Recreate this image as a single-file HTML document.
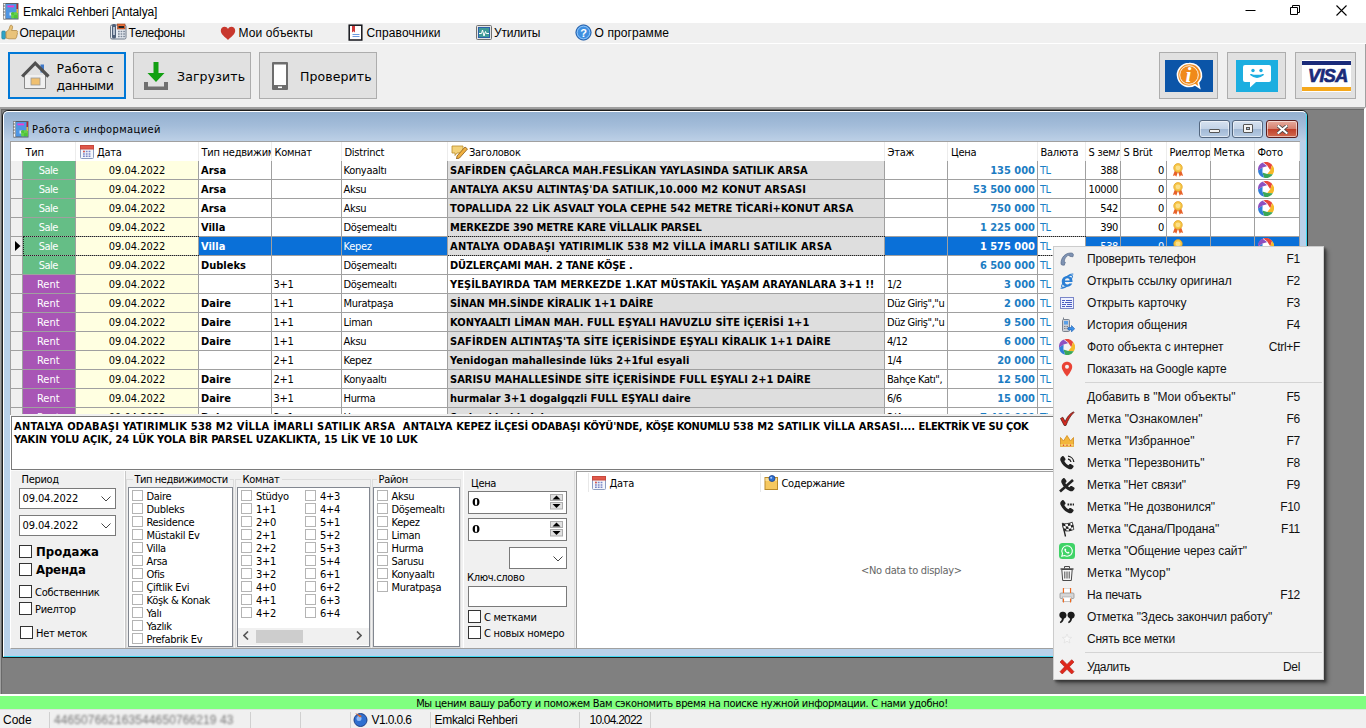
<!DOCTYPE html>
<html lang="ru"><head><meta charset="utf-8"><title>Emkalci Rehberi [Antalya]</title>
<style>
*{box-sizing:border-box}
html,body{margin:0;padding:0}
body{width:1366px;height:728px;position:relative;overflow:hidden;background:#f0f0f0;font-family:"DejaVu Sans Condensed","DejaVu Sans","Liberation Sans",sans-serif;font-stretch:condensed;font-size:11px;color:#000}
.a{position:absolute}
.t{position:absolute;white-space:pre;line-height:1}
.L{font-family:"Liberation Sans",sans-serif;font-stretch:normal}
#title{left:0;top:0;width:1366px;height:23px;background:#fff}
#menu{left:0;top:23px;width:1366px;height:21px;background:#f0f0f0;border-bottom:1px solid #fff;font-family:"Liberation Sans",sans-serif;font-stretch:normal}
#menu .t{top:3px;font-size:12px;line-height:14px}
#tool{left:0;top:44px;width:1366px;height:63px;background:#f0f0f0;border-right:1px solid #a0a0a0}
.btn{position:absolute;top:52px;height:47px;background:#e1e1e1;border:1px solid #adadad}
.btn .t{font-family:"DejaVu Sans","Liberation Sans",sans-serif;font-stretch:normal;font-size:12.5px;line-height:16.5px}
#mdi{left:0;top:107px;width:1366px;height:587px;background:#808080;border-top:2px solid #a0a0a0;border-left:1px solid #a0a0a0;border-right:2px solid #fff}
#mdi:before{content:"";position:absolute;left:0;top:0;right:0;bottom:0;border-top:1px solid #696969;border-left:1px solid #696969}
#child{left:2px;top:110px;width:1306px;height:548px;border:1px solid #1c1c1c;border-radius:6px 6px 0 0;background:#b9d1ea;overflow:hidden}
#child .hl{left:0;top:0;right:0;bottom:0;border:1px solid #fff;border-bottom-color:#3fd8f2;border-right-color:#3fd8f2;border-radius:5px 5px 0 0}
#cap{left:1px;top:1px;right:1px;height:30px;background:linear-gradient(#93b0d0,#a3bcd9 45%,#bed1e7);border-radius:4px 4px 0 0}
#client{left:10px;top:141px;width:1290px;height:508px;background:#f0f0f0;border-left:1px solid #fff;border-bottom:1px solid #a0a0a0}
.cb{position:absolute;top:120px;height:18px;border:1px solid #53667f;border-radius:3px;background:linear-gradient(#d6e2f0,#c3d3e7 48%,#a2b9d5 52%,#b7cbe3);box-shadow:inset 0 0 0 1px rgba(255,255,255,.55)}
.cb.x{border-color:#5b1d1d;background:linear-gradient(#e7ac9e,#d68170 48%,#c0402a 52%,#d16a50)}
#grid{left:11px;top:142px;width:1289px;height:272px;background:#fff;overflow:hidden}
.hd{position:absolute;top:0;height:19px;background:#fff;border-right:1px solid #ececec;font-size:11px;line-height:21px;white-space:pre;overflow:hidden;padding-left:2.5px;letter-spacing:-.25px}
.r{position:absolute;left:0;width:1289px;height:19px}
.c{position:absolute;top:0;height:19px;border-right:1px solid #a0a0a0;border-bottom:1px solid #a0a0a0;line-height:20px;white-space:pre;overflow:hidden;padding:0 3px 0 1.5px;font-size:11px;letter-spacing:-.3px}
.ind{background:#f0f0f0}
.sale{background:#65be86;color:#fff;text-align:center;letter-spacing:-.5px}
.rent{background:#a855b5;color:#fff;text-align:center;letter-spacing:0}
.dt{background:#ffffe1;text-align:center;padding:0;letter-spacing:0}
.b{font-weight:bold;letter-spacing:0;padding-left:2px}
.g{background:#dedede}
.pr{color:#1b7cc2;font-weight:bold;text-align:right;padding-right:2px;letter-spacing:0}
.tl{color:#1b7fc4;letter-spacing:-.5px;padding-left:2px}
.ra{text-align:right;padding-right:2px;letter-spacing:-.4px}
.sel{background:#0a70d8;color:#fff}
#memo{left:11px;top:416px;width:1289px;height:54px;background:#fff;border:1px solid #7a7a7a;font-weight:bold;font-size:11px;line-height:13px;padding:3px 0 0 2px;white-space:pre}
.lbl{position:absolute;white-space:pre;font-size:11px;line-height:13px;letter-spacing:-.3px}
.box{position:absolute;background:#fff;border:1px solid #828790}
.ck{position:absolute;width:11px;height:11px;background:#fff;border:1px solid #b4b4b4}
.ckd{position:absolute;width:13px;height:13px;background:#fff;border:1px solid #333}
.li{position:absolute;white-space:pre;font-size:11px;line-height:13px;letter-spacing:-.3px}
.grp{position:absolute;border:1px solid #dcdcdc}
#ctx{left:1053px;top:246px;width:271px;height:434px;background:#f2f2f2;border:1px solid #ccc;box-shadow:2px 2px 2px rgba(0,0,0,.4),4px 4px 4px rgba(0,0,0,.3);font-family:"Liberation Sans",sans-serif;font-stretch:normal;color:#111}
#ctx .t{left:33px;font-size:12px;line-height:14px}
#ctx .s{position:absolute;right:23px;font-size:12px;line-height:14px;white-space:pre;letter-spacing:-.3px}
#ctx .sep{position:absolute;left:31px;right:1px;height:1px;background:#d4d4d4}
#ctx svg{position:absolute;left:5px}
#green{left:0;top:694px;width:1366px;height:15px;background:#80ff80;border-top:2px solid #fff;font-size:11px;line-height:15px;text-align:center;white-space:pre}
#status{left:0;top:709px;width:1366px;height:19px;background:#f0f0f0;border-top:1px solid #e0e0e0;font-family:"Liberation Sans",sans-serif;font-stretch:normal}
#status .t{top:3px;font-size:12px;line-height:14px}
#status .sp{position:absolute;top:2px;width:1px;height:17px;background:#d0d0d0}
</style></head>
<body>
<div id="title" class="a L"><svg class="a" style="left:3px;top:3px" width="16" height="17" viewBox="0 0 16 17"><rect x="1" y=".5" width="14" height="15.500" fill="#4f96e4" stroke="#5a5f66"/><rect x=".5" y=".5" width="2" height="15.500" fill="#f4f6f8" stroke="#777" stroke-width=".5"/><path d="M0 3h2M0 6h2M0 9h2M0 12h2" stroke="#666" stroke-width=".9"/><rect x="4.500" y="2.500" width="6.500" height="1.800" fill="#f23ad0"/><rect x="13.500" y="1" width="1.500" height="5" fill="#b8242c"/><rect x="13.500" y="6" width="1.500" height="4" fill="#e2b43a"/><rect x="13.500" y="10" width="1.500" height="5.500" fill="#6fbf3a"/><rect x="6.500" y="9.500" width="3" height="3" fill="#dfeaf6"/><circle cx="9.800" cy="10.800" r="1.900" fill="#4fc437"/><circle cx="12.600" cy="10.800" r="1.900" fill="#66d14a"/><circle cx="9.800" cy="13.700" r="1.900" fill="#66d14a"/><circle cx="12.600" cy="13.700" r="1.900" fill="#4fc437"/></svg><div class="t" style="left:23px;top:5px;font-size:12px;line-height:14px;letter-spacing:-0.125px">Emkalci Rehberi [Antalya]</div><svg class="a" style="left:1240px;top:0" width="126" height="23" viewBox="0 0 126 23"><path d="M5.500 10.500h10" stroke="#000" stroke-width="1" fill="none"/><path d="M50.500 7.500h7v7h-7zM52.500 7.500v-2h7v7h-2" stroke="#000" stroke-width="1" fill="none"/><path d="M96.500 5.500l10 10M106.500 5.500l-10 10" stroke="#000" stroke-width="1.100" fill="none"/></svg></div>
<div id="menu" class="a"><svg class="a" style="left:1px;top:0" width="18" height="18" viewBox="0 0 18 18"><rect x=".8" y="8" width="3.600" height="8" rx="1" fill="#2fa4c9" stroke="#1c7896" stroke-width=".6"/><path d="M5 9c2-1 3.500-3 4-6 .3-1.500 2.800-1 2.600 1.200-.1 1.300-.6 2.400-1 3.300h4.600c1.700 0 1.800 2 .7 2.300 1 .5.800 2-.3 2.200.8.600.5 1.900-.5 2 .5.800 0 1.800-1.200 1.800H8c-1.200 0-2-.6-3-.8z" fill="#e9c37a" stroke="#a9803a" stroke-width=".7"/></svg><div class="t" style="left:19.5px;letter-spacing:-0.092px">Операции</div><svg class="a" style="left:110px;top:0" width="17" height="17" viewBox="0 0 17 17"><rect x=".5" y="2" width="15.500" height="14" rx="1.500" fill="#e8ecf2" stroke="#6b7787"/><rect x="2" y="1" width="4" height="14.500" rx="1.500" fill="#50617a"/><rect x="3.200" y="4" width="1.600" height="8" fill="#cfd8e4"/><rect x="7.500" y="1" width="7.500" height="5" fill="#e8703a" stroke="#9c3f18" stroke-width=".6"/><rect x="8.500" y="3" width="5.500" height="2" fill="#222"/><path d="M8 8.500h7M8 11h7M8 13.500h7" stroke="#7b8798" stroke-width="1.500" stroke-dasharray="1.700 .9"/></svg><div class="t" style="left:128.5px;letter-spacing:-0.272px">Телефоны</div><svg class="a" style="left:220px;top:3px" width="16" height="15" viewBox="0 0 16 15"><path d="M8 14C5 11 .8 8.500.8 4.800.8 2.400 2.600.8 4.600.8 6.100.8 7.300 1.600 8 2.900 8.700 1.600 9.900.8 11.400.8c2 0 3.800 1.600 3.800 4 0 3.700-4.200 6.200-7.200 9.200z" fill="#c8372d"/></svg><div class="t" style="left:238.5px;letter-spacing:0.083px">Мои объекты</div><svg class="a" style="left:348px;top:1px" width="15" height="17" viewBox="0 0 15 17"><rect x="1.2" y="1.2" width="12.6" height="14.8" fill="#fff" stroke="#14161c" stroke-width="1.500"/><path d="M4 2h3v6.500l-1.500-1.300L4 8.500z" fill="#d03a3a"/><path d="M4.500 10.500h7M4.500 12.500h7" stroke="#6a9be0" stroke-width="1"/></svg><div class="t" style="left:366.5px;letter-spacing:0.13px">Справочники</div><svg class="a" style="left:476px;top:2px" width="16" height="15" viewBox="0 0 16 15"><rect x=".5" y=".5" width="15" height="14" rx="1" fill="#e4e4e4" stroke="#707070"/><rect x="2" y="2" width="12" height="11" fill="#2a5fa8"/><rect x="3" y="3" width="10" height="9" fill="#3f9a96"/><path d="M3 8.500h2.500l1-3.500 1.500 6 1.500-4.500.8 2h2.700" stroke="#fff" stroke-width="1" fill="none"/></svg><div class="t" style="left:494px;letter-spacing:-0.193px">Утилиты</div><svg class="a" style="left:575px;top:1px" width="17" height="17" viewBox="0 0 17 17"><circle cx="8.500" cy="8.500" r="7.600" fill="#3f8fe0" stroke="#1c57a3" stroke-width="1"/><circle cx="8.500" cy="8.500" r="6.300" fill="none" stroke="#9fd0ff" stroke-width=".8"/><text x="8.500" y="12.500" font-family="Liberation Sans,sans-serif" font-size="11" font-weight="bold" fill="#fff" text-anchor="middle">?</text></svg><div class="t" style="left:594.5px;letter-spacing:0.108px">О программе</div></div>
<div id="tool" class="a"></div>
<div class="btn" style="left:8px;width:118px;border:2px solid #0078d7"><svg class="a" style="left:10px;top:6px" width="30" height="30" viewBox="0 0 30 30"><rect x="20.500" y="4.500" width="3.500" height="8" fill="#3f78c8"/><path d="M4.500 15v13.500h21V15" fill="#f0f0f0" stroke="#8a8a8a" stroke-width="1"/><path d="M2.200 16.500L15.200 3.200l13.300 13.300" fill="none" stroke="#505050" stroke-width="3.200"/><rect x="11" y="18" width="9" height="7" fill="#f0c070" stroke="#9a9a9a" stroke-width=".8"/></svg><div class="t" style="left:46.500px;top:7px"><span style="letter-spacing:0.094px">Работа с</span>
<span style="letter-spacing:-0.43px">данными</span></div></div>
<div class="btn" style="left:133px;width:118px"><svg class="a" style="left:9px;top:9px" width="26" height="29" viewBox="0 0 26 29"><path d="M10.500 0h5v11h6L13 20 4.500 11h6z" fill="#12a012"/><path d="M1 20h4v4.500h16v-4.500h4v8H1z" fill="#707070"/></svg><div class="t" style="left:43px;top:15.500px;letter-spacing:0.125px">Загрузить</div></div>
<div class="btn" style="left:259px;width:118px"><svg class="a" style="left:12px;top:9px" width="16" height="28" viewBox="0 0 16 28"><rect x="0" y="0" width="16" height="28" rx="1" fill="#6e6e6e"/><rect x="2" y="2.500" width="12" height="20.500" fill="#fff"/><rect x="6" y="24.500" width="4" height="1.600" fill="#fff"/></svg><div class="t" style="left:40px;top:15.500px;letter-spacing:0.094px">Проверить</div></div>
<div class="btn" style="left:1159px;width:59px"><div class="a" style="left:5px;top:7px;width:48px;height:32px;background:#0b55a8"></div><svg class="a" style="left:15px;top:9px" width="30" height="30" viewBox="0 0 30 30"><path d="M14 1.500a11.500 11.500 0 1 0 6 21.300l4.500 3-1.200-5A11.500 11.500 0 0 0 14 1.500z" fill="#f08a1a" stroke="#fff" stroke-width="1.600"/><circle cx="14" cy="13" r="9.300" fill="none" stroke="#fff" stroke-width=".9"/><text x="13.500" y="20" font-family="Liberation Serif,serif" font-size="21" font-style="italic" font-weight="bold" fill="#fff" text-anchor="middle">i</text></svg></div>
<div class="btn" style="left:1227px;width:59px"><div class="a" style="left:8px;top:7px;width:42px;height:32px;background:#1caee0"></div><svg class="a" style="left:14px;top:11px" width="30" height="26" viewBox="0 0 30 26"><path d="M3 1h24a2 2 0 0 1 2 2v13a2 2 0 0 1-2 2H14l-6 5.500V18H3a2 2 0 0 1-2-2V3a2 2 0 0 1 2-2z" fill="#fff"/><circle cx="11" cy="6.500" r="1.700" fill="#1caee0"/><circle cx="19" cy="6.500" r="1.700" fill="#1caee0"/><path d="M8.500 10.500q6.500 5.500 13 0q-6.500 2-13 0z" stroke="#1caee0" stroke-width="1.300" fill="#1caee0"/></svg></div>
<div class="btn" style="left:1295px;width:61px"><div class="a" style="left:6px;top:7px;width:49px;height:32px;background:#fff"></div><div class="a" style="left:6px;top:8px;width:49px;height:4px;background:#1a2b7a"></div><div class="a" style="left:6px;top:34px;width:49px;height:4px;background:#f5a81c"></div><div class="t L" style="left:12px;top:14px;font:italic bold 18px 'Liberation Sans',sans-serif;color:#1a2b7a;letter-spacing:-.6px;line-height:18px;-webkit-text-stroke:.7px #1a2b7a">VISA</div></div>
<div id="mdi" class="a"></div>
<div id="child" class="a"><div id="cap" class="a"></div><div class="hl a"></div></div>
<svg class="a" style="left:13px;top:121px" width="16" height="17" viewBox="0 0 16 17"><rect x="1" y=".5" width="14" height="15.500" fill="#4f96e4" stroke="#5a5f66"/><rect x=".5" y=".5" width="2" height="15.500" fill="#f4f6f8" stroke="#777" stroke-width=".5"/><path d="M0 3h2M0 6h2M0 9h2M0 12h2" stroke="#666" stroke-width=".9"/><rect x="4.500" y="2.500" width="6.500" height="1.800" fill="#f23ad0"/><rect x="13.500" y="1" width="1.500" height="5" fill="#b8242c"/><rect x="13.500" y="6" width="1.500" height="4" fill="#e2b43a"/><rect x="13.500" y="10" width="1.500" height="5.500" fill="#6fbf3a"/><rect x="6.500" y="9.500" width="3" height="3" fill="#dfeaf6"/><circle cx="9.800" cy="10.800" r="1.900" fill="#4fc437"/><circle cx="12.600" cy="10.800" r="1.900" fill="#66d14a"/><circle cx="9.800" cy="13.700" r="1.900" fill="#66d14a"/><circle cx="12.600" cy="13.700" r="1.900" fill="#4fc437"/></svg><div class="t" style="left:32px;top:123px;font-size:11px;line-height:14px;letter-spacing:0.413px">Работа с информацией</div>
<div class="cb" style="left:1199px;width:31px"><div class="a" style="left:9px;top:8px;width:11px;height:4px;background:#f4f4f4;border:1px solid #555;border-radius:1px"></div></div><div class="cb" style="left:1232px;width:31px"><div class="a" style="left:10px;top:3px;width:10px;height:9px;background:#f4f4f4;border:1px solid #555;border-radius:1px"></div><div class="a" style="left:13px;top:6px;width:4px;height:3px;background:#a9bfdb;border:1px solid #555"></div></div><div class="cb x" style="left:1266px;width:32px"><svg class="a" style="left:9.500px;top:3.500px" width="11" height="9" viewBox="0 0 12 10"><path d="M1.500 1.200l9 7.600M10.500 1.200l-9 7.600" stroke="#444" stroke-width="4" stroke-linecap="square"/><path d="M1.500 1.200l9 7.600M10.500 1.200l-9 7.600" stroke="#fff" stroke-width="2.300" stroke-linecap="square"/></svg></div>
<div id="client" class="a"></div>
<div id="grid" class="a"><div class="hd" style="left:0px;width:12px;border-right-color:#fff"></div><div class="hd" style="left:12px;width:53px">Тип</div><div class="hd" style="left:65px;width:123px;padding-left:21px">Дата</div><div class="hd" style="left:188px;width:73px">Тип недвижимости</div><div class="hd" style="left:261px;width:70px">Комнат</div><div class="hd" style="left:331px;width:106px">Distrinct</div><div class="hd" style="left:437px;width:437px;padding-left:21px">Заголовок</div><div class="hd" style="left:874px;width:63px">Этаж</div><div class="hd" style="left:937px;width:90px;padding-left:3px">Цена</div><div class="hd" style="left:1027px;width:48px">Валюта</div><div class="hd" style="left:1075px;width:35px">S земли</div><div class="hd" style="left:1110px;width:46px">S Brüt</div><div class="hd" style="left:1156px;width:44px">Риелтор</div><div class="hd" style="left:1200px;width:44px">Метка</div><div class="hd" style="left:1244px;width:45px">Фото</div><svg class="a" style="left:69px;top:3px" width="14" height="14" viewBox="0 0 14 14"><rect x=".5" y=".5" width="13" height="13" rx="1" fill="#f4f6fb" stroke="#8c9cc0"/><rect x=".5" y=".5" width="13" height="3.500" fill="#e0584a" stroke="#c8483c"/><path d="M3 6.500h8M3 9h8M3 11.300h8" stroke="#7a86c8" stroke-width="1.500" stroke-dasharray="1.800 1"/><rect x="3" y="5.800" width="1.800" height="1.500" fill="#e0584a"/></svg><svg class="a" style="left:440px;top:2px" width="18" height="15" viewBox="0 0 18 15"><path d="M1 2h11v7H6l-2 2.500V9H1z" fill="#f3d27a" stroke="#b98a2a" stroke-width=".8"/><path d="M6 12l8-9 2.500 2-8 9-3 1z" fill="#f0b040" stroke="#8a5a18" stroke-width=".8"/></svg><div class="r" style="top:19px"><div class="c ind" style="left:0px;width:12px"></div><div class="c sale" style="left:12px;width:53px">Sale</div><div class="c dt" style="left:65px;width:123px">09.04.2022</div><div class="c b" style="left:188px;width:73px">Arsa</div><div class="c " style="left:261px;width:70px"></div><div class="c " style="left:331px;width:106px">Konyaaltı</div><div class="c b g" style="left:437px;width:437px;letter-spacing:0.002px">SAFİRDEN ÇAĞLARCA MAH.FESLİKAN YAYLASINDA SATILIK ARSA</div><div class="c " style="left:874px;width:63px;padding-left:2px;letter-spacing:-.45px"></div><div class="c pr" style="left:937px;width:90px">135 000</div><div class="c tl" style="left:1027px;width:48px">TL</div><div class="c ra" style="left:1075px;width:35px">388</div><div class="c ra" style="left:1110px;width:46px">0</div><div class="c " style="left:1156px;width:44px"><svg class="a" style="left:5px;top:2px" width="12" height="14" viewBox="0 0 14 16"><path d="M3.500 8L1 15l2.500-1 1.500 2 2-6zM10.500 8l2.500 7-2.500-1-1.500 2-2-6z" fill="#e8622a"/><circle cx="7" cy="5.500" r="5" fill="#f6c646" stroke="#e0a020" stroke-width=".8"/><circle cx="7" cy="5.500" r="2.800" fill="#fbe08a"/></svg></div><div class="c " style="left:1200px;width:44px"></div><div class="c " style="left:1244px;width:45px"><svg class="a" style="left:3px;top:1px" width="16" height="16" viewBox="0 0 16 16"><circle cx="8" cy="8" r="7.8" fill="#fff"/><path d="M9.5 4L5 .6A8 8 0 0 1 14.1 2.900L12.3 8.200z" fill="#e8453c"/><path d="M12.3 8.200L14.1 2.900A8 8 0 0 1 14.8 12.2L9.2 12.1z" fill="#f6b928"/><path d="M9.2 12.1L14.8 12.2A8 8 0 0 1 6.1 15.8L4.4 10.4z" fill="#3aa757"/><path d="M4.4 10.4L6.1 15.8A8 8 0 0 1 0 8.600L4.6 5.400z" fill="#2f7ed8"/><path d="M4.6 5.400L0 8.600A8 8 0 0 1 5 .6L9.5 4z" fill="#8e4fc0"/><path d="M9.5 4L5 .6" stroke="#fff" stroke-width=".7"/></svg></div></div><div class="r" style="top:38px"><div class="c ind" style="left:0px;width:12px"></div><div class="c sale" style="left:12px;width:53px">Sale</div><div class="c dt" style="left:65px;width:123px">09.04.2022</div><div class="c b" style="left:188px;width:73px">Arsa</div><div class="c " style="left:261px;width:70px"></div><div class="c " style="left:331px;width:106px">Aksu</div><div class="c b g" style="left:437px;width:437px;letter-spacing:0.117px">ANTALYA AKSU ALTINTAŞ'DA SATILIK,10.000 M2 KONUT ARSASI</div><div class="c " style="left:874px;width:63px;padding-left:2px;letter-spacing:-.45px"></div><div class="c pr" style="left:937px;width:90px">53 500 000</div><div class="c tl" style="left:1027px;width:48px">TL</div><div class="c ra" style="left:1075px;width:35px">10000</div><div class="c ra" style="left:1110px;width:46px">0</div><div class="c " style="left:1156px;width:44px"><svg class="a" style="left:5px;top:2px" width="12" height="14" viewBox="0 0 14 16"><path d="M3.500 8L1 15l2.500-1 1.500 2 2-6zM10.500 8l2.500 7-2.500-1-1.500 2-2-6z" fill="#e8622a"/><circle cx="7" cy="5.500" r="5" fill="#f6c646" stroke="#e0a020" stroke-width=".8"/><circle cx="7" cy="5.500" r="2.800" fill="#fbe08a"/></svg></div><div class="c " style="left:1200px;width:44px"></div><div class="c " style="left:1244px;width:45px"><svg class="a" style="left:3px;top:1px" width="16" height="16" viewBox="0 0 16 16"><circle cx="8" cy="8" r="7.8" fill="#fff"/><path d="M9.5 4L5 .6A8 8 0 0 1 14.1 2.900L12.3 8.200z" fill="#e8453c"/><path d="M12.3 8.200L14.1 2.900A8 8 0 0 1 14.8 12.2L9.2 12.1z" fill="#f6b928"/><path d="M9.2 12.1L14.8 12.2A8 8 0 0 1 6.1 15.8L4.4 10.4z" fill="#3aa757"/><path d="M4.4 10.4L6.1 15.8A8 8 0 0 1 0 8.600L4.6 5.400z" fill="#2f7ed8"/><path d="M4.6 5.400L0 8.600A8 8 0 0 1 5 .6L9.5 4z" fill="#8e4fc0"/><path d="M9.5 4L5 .6" stroke="#fff" stroke-width=".7"/></svg></div></div><div class="r" style="top:57px"><div class="c ind" style="left:0px;width:12px"></div><div class="c sale" style="left:12px;width:53px">Sale</div><div class="c dt" style="left:65px;width:123px">09.04.2022</div><div class="c b" style="left:188px;width:73px">Arsa</div><div class="c " style="left:261px;width:70px"></div><div class="c " style="left:331px;width:106px">Aksu</div><div class="c b g" style="left:437px;width:437px;letter-spacing:0.025px">TOPALLIDA 22 LİK ASVALT YOLA CEPHE 542 METRE TİCARİ+KONUT ARSA</div><div class="c " style="left:874px;width:63px;padding-left:2px;letter-spacing:-.45px"></div><div class="c pr" style="left:937px;width:90px">750 000</div><div class="c tl" style="left:1027px;width:48px">TL</div><div class="c ra" style="left:1075px;width:35px">542</div><div class="c ra" style="left:1110px;width:46px">0</div><div class="c " style="left:1156px;width:44px"><svg class="a" style="left:5px;top:2px" width="12" height="14" viewBox="0 0 14 16"><path d="M3.500 8L1 15l2.500-1 1.500 2 2-6zM10.500 8l2.500 7-2.500-1-1.500 2-2-6z" fill="#e8622a"/><circle cx="7" cy="5.500" r="5" fill="#f6c646" stroke="#e0a020" stroke-width=".8"/><circle cx="7" cy="5.500" r="2.800" fill="#fbe08a"/></svg></div><div class="c " style="left:1200px;width:44px"></div><div class="c " style="left:1244px;width:45px"><svg class="a" style="left:3px;top:1px" width="16" height="16" viewBox="0 0 16 16"><circle cx="8" cy="8" r="7.8" fill="#fff"/><path d="M9.5 4L5 .6A8 8 0 0 1 14.1 2.900L12.3 8.200z" fill="#e8453c"/><path d="M12.3 8.200L14.1 2.900A8 8 0 0 1 14.8 12.2L9.2 12.1z" fill="#f6b928"/><path d="M9.2 12.1L14.8 12.2A8 8 0 0 1 6.1 15.8L4.4 10.4z" fill="#3aa757"/><path d="M4.4 10.4L6.1 15.8A8 8 0 0 1 0 8.600L4.6 5.400z" fill="#2f7ed8"/><path d="M4.6 5.400L0 8.600A8 8 0 0 1 5 .6L9.5 4z" fill="#8e4fc0"/><path d="M9.5 4L5 .6" stroke="#fff" stroke-width=".7"/></svg></div></div><div class="r" style="top:76px"><div class="c ind" style="left:0px;width:12px"></div><div class="c sale" style="left:12px;width:53px">Sale</div><div class="c dt" style="left:65px;width:123px">09.04.2022</div><div class="c b" style="left:188px;width:73px">Villa</div><div class="c " style="left:261px;width:70px"></div><div class="c " style="left:331px;width:106px">Döşemealtı</div><div class="c b g" style="left:437px;width:437px;letter-spacing:-0.143px">MERKEZDE 390 METRE KARE VİLLALIK PARSEL</div><div class="c " style="left:874px;width:63px;padding-left:2px;letter-spacing:-.45px"></div><div class="c pr" style="left:937px;width:90px">1 225 000</div><div class="c tl" style="left:1027px;width:48px">TL</div><div class="c ra" style="left:1075px;width:35px">390</div><div class="c ra" style="left:1110px;width:46px">0</div><div class="c " style="left:1156px;width:44px"><svg class="a" style="left:5px;top:2px" width="12" height="14" viewBox="0 0 14 16"><path d="M3.500 8L1 15l2.500-1 1.500 2 2-6zM10.500 8l2.500 7-2.500-1-1.500 2-2-6z" fill="#e8622a"/><circle cx="7" cy="5.500" r="5" fill="#f6c646" stroke="#e0a020" stroke-width=".8"/><circle cx="7" cy="5.500" r="2.800" fill="#fbe08a"/></svg></div><div class="c " style="left:1200px;width:44px"></div><div class="c " style="left:1244px;width:45px"></div></div><div class="r" style="top:95px"><div class="c ind" style="left:0px;width:12px"><svg class="a" style="left:4px;top:4px" width="6" height="10" viewBox="0 0 6 10"><path d="M0 0l5.500 5L0 10z" fill="#000"/></svg></div><div class="c sale" style="left:12px;width:53px">Sale</div><div class="c dt" style="left:65px;width:123px">09.04.2022</div><div class="c b sel" style="left:188px;width:73px">Villa</div><div class="c  sel" style="left:261px;width:70px"></div><div class="c  sel" style="left:331px;width:106px">Kepez</div><div class="c b g" style="left:437px;width:437px;letter-spacing:0.241px">ANTALYA ODABAŞI YATIRIMLIK 538 M2 VİLLA İMARLI SATILIK ARSA</div><div class="c  sel" style="left:874px;width:63px;padding-left:2px;letter-spacing:-.45px"></div><div class="c pr sel" style="left:937px;width:90px;color:#fff">1 575 000</div><div class="c tl" style="left:1027px;width:48px">TL</div><div class="c ra sel" style="left:1075px;width:35px">538</div><div class="c ra sel" style="left:1110px;width:46px">0</div><div class="c  sel" style="left:1156px;width:44px"><svg class="a" style="left:5px;top:2px" width="12" height="14" viewBox="0 0 14 16"><path d="M3.500 8L1 15l2.500-1 1.500 2 2-6zM10.500 8l2.500 7-2.500-1-1.500 2-2-6z" fill="#e8622a"/><circle cx="7" cy="5.500" r="5" fill="#f6c646" stroke="#e0a020" stroke-width=".8"/><circle cx="7" cy="5.500" r="2.800" fill="#fbe08a"/></svg></div><div class="c  sel" style="left:1200px;width:44px"></div><div class="c  sel" style="left:1244px;width:45px"><svg class="a" style="left:3px;top:1px" width="16" height="16" viewBox="0 0 16 16"><circle cx="8" cy="8" r="7.8" fill="#fff"/><path d="M9.5 4L5 .6A8 8 0 0 1 14.1 2.900L12.3 8.200z" fill="#e8453c"/><path d="M12.3 8.200L14.1 2.900A8 8 0 0 1 14.8 12.2L9.2 12.1z" fill="#f6b928"/><path d="M9.2 12.1L14.8 12.2A8 8 0 0 1 6.1 15.8L4.4 10.4z" fill="#3aa757"/><path d="M4.4 10.4L6.1 15.8A8 8 0 0 1 0 8.600L4.6 5.400z" fill="#2f7ed8"/><path d="M4.6 5.400L0 8.600A8 8 0 0 1 5 .6L9.5 4z" fill="#8e4fc0"/><path d="M9.5 4L5 .6" stroke="#fff" stroke-width=".7"/></svg></div></div><div class="r" style="top:114px"><div class="c ind" style="left:0px;width:12px"></div><div class="c sale" style="left:12px;width:53px">Sale</div><div class="c dt" style="left:65px;width:123px">09.04.2022</div><div class="c b" style="left:188px;width:73px">Dubleks</div><div class="c " style="left:261px;width:70px"></div><div class="c " style="left:331px;width:106px">Döşemealtı</div><div class="c b " style="left:437px;width:437px;letter-spacing:-0.192px">DÜZLERÇAMI MAH. 2 TANE KÖŞE .</div><div class="c " style="left:874px;width:63px;padding-left:2px;letter-spacing:-.45px"></div><div class="c pr" style="left:937px;width:90px">6 500 000</div><div class="c tl" style="left:1027px;width:48px">TL</div><div class="c ra" style="left:1075px;width:35px">150</div><div class="c ra" style="left:1110px;width:46px">0</div><div class="c " style="left:1156px;width:44px"><svg class="a" style="left:5px;top:2px" width="12" height="14" viewBox="0 0 14 16"><path d="M3.500 8L1 15l2.500-1 1.500 2 2-6zM10.500 8l2.500 7-2.500-1-1.500 2-2-6z" fill="#e8622a"/><circle cx="7" cy="5.500" r="5" fill="#f6c646" stroke="#e0a020" stroke-width=".8"/><circle cx="7" cy="5.500" r="2.800" fill="#fbe08a"/></svg></div><div class="c " style="left:1200px;width:44px"></div><div class="c " style="left:1244px;width:45px"></div></div><div class="r" style="top:133px"><div class="c ind" style="left:0px;width:12px"></div><div class="c rent" style="left:12px;width:53px">Rent</div><div class="c dt" style="left:65px;width:123px">09.04.2022</div><div class="c b" style="left:188px;width:73px"></div><div class="c " style="left:261px;width:70px">3+1</div><div class="c " style="left:331px;width:106px">Döşemealtı</div><div class="c b " style="left:437px;width:437px;letter-spacing:0.035px">YEŞİLBAYIRDA TAM MERKEZDE 1.KAT MÜSTAKİL YAŞAM ARAYANLARA 3+1 !!</div><div class="c " style="left:874px;width:63px;padding-left:2px;letter-spacing:-.45px">1/2</div><div class="c pr" style="left:937px;width:90px">3 000</div><div class="c tl" style="left:1027px;width:48px">TL</div><div class="c ra" style="left:1075px;width:35px"></div><div class="c ra" style="left:1110px;width:46px">0</div><div class="c " style="left:1156px;width:44px"></div><div class="c " style="left:1200px;width:44px"></div><div class="c " style="left:1244px;width:45px"></div></div><div class="r" style="top:152px"><div class="c ind" style="left:0px;width:12px"></div><div class="c rent" style="left:12px;width:53px">Rent</div><div class="c dt" style="left:65px;width:123px">09.04.2022</div><div class="c b" style="left:188px;width:73px">Daire</div><div class="c " style="left:261px;width:70px">1+1</div><div class="c " style="left:331px;width:106px">Muratpaşa</div><div class="c b g" style="left:437px;width:437px;letter-spacing:-0.057px">SİNAN MH.SİNDE KİRALIK 1+1 DAİRE</div><div class="c " style="left:874px;width:63px;padding-left:2px;letter-spacing:-.45px">Düz Giriş&quot;,&quot;u</div><div class="c pr" style="left:937px;width:90px">2 000</div><div class="c tl" style="left:1027px;width:48px">TL</div><div class="c ra" style="left:1075px;width:35px"></div><div class="c ra" style="left:1110px;width:46px">0</div><div class="c " style="left:1156px;width:44px"></div><div class="c " style="left:1200px;width:44px"></div><div class="c " style="left:1244px;width:45px"></div></div><div class="r" style="top:171px"><div class="c ind" style="left:0px;width:12px"></div><div class="c rent" style="left:12px;width:53px">Rent</div><div class="c dt" style="left:65px;width:123px">09.04.2022</div><div class="c b" style="left:188px;width:73px">Daire</div><div class="c " style="left:261px;width:70px">1+1</div><div class="c " style="left:331px;width:106px">Liman</div><div class="c b g" style="left:437px;width:437px;letter-spacing:0.053px">KONYAALTI LİMAN MAH. FULL EŞYALI HAVUZLU SİTE İÇERİSİ 1+1</div><div class="c " style="left:874px;width:63px;padding-left:2px;letter-spacing:-.45px">Düz Giriş&quot;,&quot;u</div><div class="c pr" style="left:937px;width:90px">9 500</div><div class="c tl" style="left:1027px;width:48px">TL</div><div class="c ra" style="left:1075px;width:35px"></div><div class="c ra" style="left:1110px;width:46px">0</div><div class="c " style="left:1156px;width:44px"></div><div class="c " style="left:1200px;width:44px"></div><div class="c " style="left:1244px;width:45px"></div></div><div class="r" style="top:190px"><div class="c ind" style="left:0px;width:12px"></div><div class="c rent" style="left:12px;width:53px">Rent</div><div class="c dt" style="left:65px;width:123px">09.04.2022</div><div class="c b" style="left:188px;width:73px">Daire</div><div class="c " style="left:261px;width:70px">1+1</div><div class="c " style="left:331px;width:106px">Aksu</div><div class="c b g" style="left:437px;width:437px;letter-spacing:0.117px">SAFİRDEN ALTINTAŞ'TA SİTE İÇERİSİNDE EŞYALI KİRALIK 1+1 DAİRE</div><div class="c " style="left:874px;width:63px;padding-left:2px;letter-spacing:-.45px">4/12</div><div class="c pr" style="left:937px;width:90px">6 000</div><div class="c tl" style="left:1027px;width:48px">TL</div><div class="c ra" style="left:1075px;width:35px"></div><div class="c ra" style="left:1110px;width:46px">0</div><div class="c " style="left:1156px;width:44px"></div><div class="c " style="left:1200px;width:44px"></div><div class="c " style="left:1244px;width:45px"></div></div><div class="r" style="top:209px"><div class="c ind" style="left:0px;width:12px"></div><div class="c rent" style="left:12px;width:53px">Rent</div><div class="c dt" style="left:65px;width:123px">09.04.2022</div><div class="c b" style="left:188px;width:73px"></div><div class="c " style="left:261px;width:70px">2+1</div><div class="c " style="left:331px;width:106px">Kepez</div><div class="c b g" style="left:437px;width:437px;letter-spacing:0.024px">Yenidogan mahallesinde lüks 2+1ful esyali</div><div class="c " style="left:874px;width:63px;padding-left:2px;letter-spacing:-.45px">1/4</div><div class="c pr" style="left:937px;width:90px">20 000</div><div class="c tl" style="left:1027px;width:48px">TL</div><div class="c ra" style="left:1075px;width:35px"></div><div class="c ra" style="left:1110px;width:46px">0</div><div class="c " style="left:1156px;width:44px"></div><div class="c " style="left:1200px;width:44px"></div><div class="c " style="left:1244px;width:45px"></div></div><div class="r" style="top:228px"><div class="c ind" style="left:0px;width:12px"></div><div class="c rent" style="left:12px;width:53px">Rent</div><div class="c dt" style="left:65px;width:123px">09.04.2022</div><div class="c b" style="left:188px;width:73px">Daire</div><div class="c " style="left:261px;width:70px">2+1</div><div class="c " style="left:331px;width:106px">Konyaaltı</div><div class="c b g" style="left:437px;width:437px;letter-spacing:-0.0px">SARISU MAHALLESİNDE SİTE İÇERİSİNDE FULL EŞYALI 2+1 DAİRE</div><div class="c " style="left:874px;width:63px;padding-left:2px;letter-spacing:-.45px">Bahçe Katı&quot;,</div><div class="c pr" style="left:937px;width:90px">12 500</div><div class="c tl" style="left:1027px;width:48px">TL</div><div class="c ra" style="left:1075px;width:35px"></div><div class="c ra" style="left:1110px;width:46px">0</div><div class="c " style="left:1156px;width:44px"></div><div class="c " style="left:1200px;width:44px"></div><div class="c " style="left:1244px;width:45px"></div></div><div class="r" style="top:247px"><div class="c ind" style="left:0px;width:12px"></div><div class="c rent" style="left:12px;width:53px">Rent</div><div class="c dt" style="left:65px;width:123px">09.04.2022</div><div class="c b" style="left:188px;width:73px">Daire</div><div class="c " style="left:261px;width:70px">3+1</div><div class="c " style="left:331px;width:106px">Hurma</div><div class="c b g" style="left:437px;width:437px;letter-spacing:-0.026px">hurmalar 3+1 dogalgqzli FULL EŞYALI daire</div><div class="c " style="left:874px;width:63px;padding-left:2px;letter-spacing:-.45px">6/6</div><div class="c pr" style="left:937px;width:90px">15 000</div><div class="c tl" style="left:1027px;width:48px">TL</div><div class="c ra" style="left:1075px;width:35px"></div><div class="c ra" style="left:1110px;width:46px">0</div><div class="c " style="left:1156px;width:44px"></div><div class="c " style="left:1200px;width:44px"></div><div class="c " style="left:1244px;width:45px"></div></div><div class="r" style="top:266px"><div class="c ind" style="left:0px;width:12px"></div><div class="c rent" style="left:12px;width:53px">Rent</div><div class="c dt" style="left:65px;width:123px">09.04.2022</div><div class="c b" style="left:188px;width:73px">Daire</div><div class="c " style="left:261px;width:70px">3+1</div><div class="c " style="left:331px;width:106px">Hurma</div><div class="c b g" style="left:437px;width:437px">Sarisu kiralık daire</div><div class="c " style="left:874px;width:63px;padding-left:2px;letter-spacing:-.45px">2/4</div><div class="c pr" style="left:937px;width:90px">7 400 000</div><div class="c tl" style="left:1027px;width:48px">TL</div><div class="c ra" style="left:1075px;width:35px"></div><div class="c ra" style="left:1110px;width:46px">0</div><div class="c " style="left:1156px;width:44px"></div><div class="c " style="left:1200px;width:44px"></div><div class="c " style="left:1244px;width:45px"></div></div><div class="a" style="left:12px;top:94px;width:176px;height:20px;border-top:1px dotted #222;border-bottom:1px dotted #222;border-left:1px dotted #222"></div><div class="a" style="left:437px;top:94px;width:437px;height:20px;border-top:1px dotted #222;border-bottom:1px dotted #222"></div><div class="a" style="left:1027px;top:94px;width:48px;height:20px;border-top:1px dotted #222;border-bottom:1px dotted #222"></div></div>
<div class="a" style="left:10px;top:141px;width:1290px;height:1px;background:#a0a0a0"></div><div class="a" style="left:10px;top:141px;width:1px;height:274px;background:#a0a0a0"></div>
<div id="memo" class="a"><span style="letter-spacing:0.23px">ANTALYA ODABAŞI YATIRIMLIK 538 M2 VİLLA İMARLI SATILIK ARSA</span><span style="letter-spacing:0.28px">  ANTALYA </span><span style="letter-spacing:-0.182px">KEPEZ İLÇESİ ODABAŞI KÖYÜ'NDE, </span><span style="letter-spacing:-0.368px">KÖŞE KONUMLU </span><span style="letter-spacing:0.048px">538 M2 SATILIK VİLLA ARSASI.... </span><span style="letter-spacing:-0.381px">ELEKTRİK VE SU ÇOK</span>
<span style="letter-spacing:-0.086px">YAKIN YOLU AÇIK, 24 LÜK YOLA BİR PARSEL UZAKLIKTA, 15 LİK VE 10 LUK</span></div>
<div class="a" style="left:11px;top:470px;width:1289px;height:1px;background:#fafafa"></div><div class="a" style="left:124px;top:471px;width:1px;height:177px;background:#fdfdfd"></div><div class="a" style="left:125px;top:471px;width:1px;height:177px;background:#c8c8c8"></div><div class="lbl" style="left:21.500px;top:473px">Период</div><div class="box" style="left:19px;top:488px;width:97px;height:21px;border-color:#7a7a7a"><div class="t" style="left:2.500px;top:3px;font-size:11px;line-height:13px;letter-spacing:-0.106px">09.04.2022</div><svg class="a" style="left:81px;top:7px" width="10" height="6" viewBox="0 0 10 6"><path d="M.5.500l4.500 4.500L9.500.500" stroke="#444" fill="none"/></svg></div><div class="box" style="left:19px;top:515px;width:97px;height:21px;border-color:#7a7a7a"><div class="t" style="left:2.500px;top:3px;font-size:11px;line-height:13px;letter-spacing:-0.106px">09.04.2022</div><svg class="a" style="left:81px;top:7px" width="10" height="6" viewBox="0 0 10 6"><path d="M.5.500l4.500 4.500L9.500.500" stroke="#444" fill="none"/></svg></div><div class="ckd" style="left:19px;top:545px"></div><div class="t" style="left:36px;top:544px;font:bold 13px 'DejaVu Sans Condensed','DejaVu Sans','Liberation Sans',sans-serif;font-stretch:condensed;line-height:15px;letter-spacing:-0.013px">Продажа</div><div class="ckd" style="left:19px;top:563px"></div><div class="t" style="left:36px;top:562px;font:bold 13px 'DejaVu Sans Condensed','DejaVu Sans','Liberation Sans',sans-serif;font-stretch:condensed;line-height:15px;letter-spacing:-0.156px">Аренда</div><div class="ckd" style="left:19px;top:585px"></div><div class="lbl" style="left:35px;top:586px;letter-spacing:-0.275px">Собственник</div><div class="ckd" style="left:19px;top:602px"></div><div class="lbl" style="left:35px;top:603px">Риелтор</div><div class="ckd" style="left:20px;top:626px"></div><div class="lbl" style="left:36px;top:627px">Нет меток</div><div class="grp" style="left:126px;top:479px;width:108px;height:169px"></div><div class="lbl" style="left:132.5px;top:473px;background:#f0f0f0;padding:0 2px;letter-spacing:-0.438px">Тип недвижимости</div><div class="box" style="left:128px;top:487px;width:105px;height:160px"></div><div class="ck" style="left:132px;top:490px"></div><div class="li" style="left:146.500px;top:490px">Daire</div><div class="ck" style="left:132px;top:503px"></div><div class="li" style="left:146.500px;top:503px">Dubleks</div><div class="ck" style="left:132px;top:516px"></div><div class="li" style="left:146.500px;top:516px">Residence</div><div class="ck" style="left:132px;top:529px"></div><div class="li" style="left:146.500px;top:529px">Müstakil Ev</div><div class="ck" style="left:132px;top:542px"></div><div class="li" style="left:146.500px;top:542px">Villa</div><div class="ck" style="left:132px;top:555px"></div><div class="li" style="left:146.500px;top:555px">Arsa</div><div class="ck" style="left:132px;top:568px"></div><div class="li" style="left:146.500px;top:568px">Ofis</div><div class="ck" style="left:132px;top:581px"></div><div class="li" style="left:146.500px;top:581px">Çiftlik Evi</div><div class="ck" style="left:132px;top:594px"></div><div class="li" style="left:146.500px;top:594px">Köşk &amp; Konak</div><div class="ck" style="left:132px;top:607px"></div><div class="li" style="left:146.500px;top:607px">Yalı</div><div class="ck" style="left:132px;top:620px"></div><div class="li" style="left:146.500px;top:620px">Yazlık</div><div class="ck" style="left:132px;top:633px"></div><div class="li" style="left:146.500px;top:633px">Prefabrik Ev</div><div class="grp" style="left:235px;top:479px;width:136px;height:169px"></div><div class="lbl" style="left:240.5px;top:473px;background:#f0f0f0;padding:0 2px">Комнат</div><div class="box" style="left:237px;top:487px;width:133px;height:160px"></div><div class="ck" style="left:241px;top:490px"></div><div class="li" style="left:256px;top:490px">Stüdyo</div><div class="ck" style="left:305px;top:490px"></div><div class="li" style="left:320px;top:490px">4+3</div><div class="ck" style="left:241px;top:503px"></div><div class="li" style="left:256px;top:503px">1+1</div><div class="ck" style="left:305px;top:503px"></div><div class="li" style="left:320px;top:503px">4+4</div><div class="ck" style="left:241px;top:516px"></div><div class="li" style="left:256px;top:516px">2+0</div><div class="ck" style="left:305px;top:516px"></div><div class="li" style="left:320px;top:516px">5+1</div><div class="ck" style="left:241px;top:529px"></div><div class="li" style="left:256px;top:529px">2+1</div><div class="ck" style="left:305px;top:529px"></div><div class="li" style="left:320px;top:529px">5+2</div><div class="ck" style="left:241px;top:542px"></div><div class="li" style="left:256px;top:542px">2+2</div><div class="ck" style="left:305px;top:542px"></div><div class="li" style="left:320px;top:542px">5+3</div><div class="ck" style="left:241px;top:555px"></div><div class="li" style="left:256px;top:555px">3+1</div><div class="ck" style="left:305px;top:555px"></div><div class="li" style="left:320px;top:555px">5+4</div><div class="ck" style="left:241px;top:568px"></div><div class="li" style="left:256px;top:568px">3+2</div><div class="ck" style="left:305px;top:568px"></div><div class="li" style="left:320px;top:568px">6+1</div><div class="ck" style="left:241px;top:581px"></div><div class="li" style="left:256px;top:581px">4+0</div><div class="ck" style="left:305px;top:581px"></div><div class="li" style="left:320px;top:581px">6+2</div><div class="ck" style="left:241px;top:594px"></div><div class="li" style="left:256px;top:594px">4+1</div><div class="ck" style="left:305px;top:594px"></div><div class="li" style="left:320px;top:594px">6+3</div><div class="ck" style="left:241px;top:607px"></div><div class="li" style="left:256px;top:607px">4+2</div><div class="ck" style="left:305px;top:607px"></div><div class="li" style="left:320px;top:607px">6+4</div><div class="a" style="left:238px;top:628px;width:131px;height:17px;background:#f0f0f0"></div><div class="a" style="left:256px;top:630px;width:47px;height:13px;background:#cdcdcd"></div><svg class="a" style="left:243px;top:631px" width="6" height="9" viewBox="0 0 6 9"><path d="M5 .500L1 4.500 5 8.500" stroke="#555" stroke-width="1.600" fill="none"/></svg><svg class="a" style="left:356px;top:631px" width="6" height="9" viewBox="0 0 6 9"><path d="M1 .500L5 4.500 1 8.500" stroke="#555" stroke-width="1.600" fill="none"/></svg><div class="grp" style="left:372px;top:479px;width:89px;height:169px"></div><div class="lbl" style="left:376.5px;top:473px;background:#f0f0f0;padding:0 2px">Район</div><div class="box" style="left:373px;top:487px;width:87px;height:160px"></div><div class="ck" style="left:377px;top:490px"></div><div class="li" style="left:391.500px;top:490px">Aksu</div><div class="ck" style="left:377px;top:503px"></div><div class="li" style="left:391.500px;top:503px">Döşemealtı</div><div class="ck" style="left:377px;top:516px"></div><div class="li" style="left:391.500px;top:516px">Kepez</div><div class="ck" style="left:377px;top:529px"></div><div class="li" style="left:391.500px;top:529px">Liman</div><div class="ck" style="left:377px;top:542px"></div><div class="li" style="left:391.500px;top:542px">Hurma</div><div class="ck" style="left:377px;top:555px"></div><div class="li" style="left:391.500px;top:555px">Sarusu</div><div class="ck" style="left:377px;top:568px"></div><div class="li" style="left:391.500px;top:568px">Konyaaltı</div><div class="ck" style="left:377px;top:581px"></div><div class="li" style="left:391.500px;top:581px">Muratpaşa</div><div class="a" style="left:463px;top:471px;width:1px;height:177px;background:#fff"></div><div class="a" style="left:574px;top:471px;width:1px;height:177px;background:#dcdcdc"></div><div class="lbl" style="left:471px;top:477px">Цена</div><div class="box" style="left:468px;top:491px;width:99px;height:23px;border-color:#7a7a7a"><div class="t" style="left:2.500px;top:2px;font:bold 13.500px 'Liberation Serif',serif;line-height:15px;transform:scaleX(1.2);transform-origin:0 0">0</div><svg class="a" style="left:81px;top:2px" width="13" height="16" viewBox="0 0 13 16"><rect x=".5" y=".5" width="12" height="6" fill="#e1e1e1" stroke="#adadad"/><rect x=".5" y="8.500" width="12" height="6.500" fill="#e1e1e1" stroke="#adadad"/><path d="M2.500 5.500L6.500 1.500l4 4zM2.500 10L6.500 14l4-4z" fill="#000"/></svg></div><div class="box" style="left:468px;top:518px;width:99px;height:23px;border-color:#7a7a7a"><div class="t" style="left:2.500px;top:2px;font:bold 13.500px 'Liberation Serif',serif;line-height:15px;transform:scaleX(1.2);transform-origin:0 0">0</div><svg class="a" style="left:81px;top:2px" width="13" height="16" viewBox="0 0 13 16"><rect x=".5" y=".5" width="12" height="6" fill="#e1e1e1" stroke="#adadad"/><rect x=".5" y="8.500" width="12" height="6.500" fill="#e1e1e1" stroke="#adadad"/><path d="M2.500 5.500L6.500 1.500l4 4zM2.500 10L6.500 14l4-4z" fill="#000"/></svg></div><div class="box" style="left:509px;top:547px;width:58px;height:22px;border-color:#7a7a7a"><svg class="a" style="left:43px;top:8px" width="10" height="6" viewBox="0 0 10 6"><path d="M.5.500l4.500 4.500L9.500.500" stroke="#444" fill="none"/></svg></div><div class="lbl" style="left:467px;top:571px">Ключ.слово</div><div class="box" style="left:468px;top:586px;width:99px;height:21px;border-color:#7a7a7a"></div><div class="ckd" style="left:468px;top:610px"></div><div class="lbl" style="left:484px;top:611px">С метками</div><div class="ckd" style="left:468px;top:626px"></div><div class="lbl" style="left:484px;top:627px;letter-spacing:-0.243px">С новых номеро</div><div class="a" style="left:576px;top:471px;width:724px;height:177px;background:#fff;border:1px solid #a0a0a0;border-bottom:0"></div><svg class="a" style="left:592px;top:476px" width="14" height="14" viewBox="0 0 14 14"><rect x=".5" y=".5" width="13" height="13" rx="1" fill="#f4f6fb" stroke="#8c9cc0"/><rect x=".5" y=".5" width="13" height="3.500" fill="#e0584a" stroke="#c8483c"/><path d="M3 6.500h8M3 9h8M3 11.300h8" stroke="#7a86c8" stroke-width="1.500" stroke-dasharray="1.800 1"/><rect x="3" y="5.800" width="1.800" height="1.500" fill="#e0584a"/></svg><div class="lbl" style="left:609.500px;top:477px">Дата</div><svg class="a" style="left:764px;top:475px" width="15" height="15" viewBox="0 0 15 15"><rect x="1" y="2.500" width="12.500" height="12" fill="#f6c860" stroke="#b98a2a"/><rect x="1.500" y="3" width="11.500" height="3" fill="#f9dc92"/><circle cx="8" cy="3.500" r="3" fill="#2f6fd0" stroke="#1b3f86" stroke-width=".8"/><circle cx="7.200" cy="2.700" r="1" fill="#a8ccff"/></svg><div class="lbl" style="left:781.500px;top:477px">Содержание</div><div class="a" style="left:588px;top:473px;width:1px;height:19px;background:#e8e8e8"></div><div class="a" style="left:760px;top:473px;width:1px;height:19px;background:#e8e8e8"></div><div class="lbl" style="left:861px;top:564px;color:#666">&lt;No data to display&gt;</div>
<div id="green" class="a"><span style="letter-spacing:-0.311px;margin-left:-2px">Мы ценим вашу работу и поможем Вам сэкономить время на поиске нужной информации. С нами удобно!</span></div>
<div id="status" class="a"><div class="t" style="left:3px">Code</div><div class="t" style="left:54px;color:#777;filter:blur(1.300px);letter-spacing:.1px">446507662163544650766219 43</div><div class="sp" style="left:49px"></div><div class="sp" style="left:250px"></div><div class="sp" style="left:300px"></div><div class="sp" style="left:350px"></div><div class="sp" style="left:430px"></div><div class="sp" style="left:579px"></div><div class="sp" style="left:650px"></div><svg class="a" style="left:353px;top:2px" width="15" height="15" viewBox="0 0 15 15"><circle cx="7.500" cy="8" r="6.500" fill="#2f6fd0" stroke="#1b3f86"/><circle cx="6" cy="6.500" r="2.500" fill="#8fbaf5"/><path d="M2 1l7 3-2 1.500z" fill="#d8642a"/></svg><div class="t" style="left:371.500px;letter-spacing:-0.6px">V1.0.0.6</div><div class="t" style="left:434.500px;letter-spacing:-0.298px">Emkalci Rehberi</div><div class="t" style="left:589.500px;letter-spacing:-0.785px">10.04.2022</div></div>
<div id="ctx" class="a"><div class="t" style="top:5px;letter-spacing:-0.178px">Проверить телефон</div><div class="s" style="top:5px">F1</div><svg style="top:4px" width="16" height="16" viewBox="0 0 16 16"><path d="M2 12.500c0-6 4-10.500 10-10.500 1.800 0 2.600 1 2.300 2.300l-.4 1.500-3.200-.5-.2-1.200c-2.700.3-5 2.800-5.300 6.400l1.100.7-1 3-2.300-.2c-.7-.1-1-.7-1-1.500z" fill="#7f93b3" stroke="#55698a" stroke-width=".7"/></svg><div class="t" style="top:27px;letter-spacing:0.025px">Открыть ссылку оригинал</div><div class="s" style="top:27px">F2</div><svg style="top:26px" width="16" height="16" viewBox="0 0 16 16"><path d="M8.300 3C5 3 2.800 5.400 2.800 8.600c0 3 2.200 5.100 5.500 5.100 2.400 0 4.200-1.200 4.900-3.200h-2.900c-.4.600-1.100.9-1.900.9-1.400 0-2.300-.9-2.500-2.300h7.600C13.800 5.500 11.700 3 8.300 3zM5.900 7.400c.2-1.300 1.100-2.100 2.400-2.100s2.200.800 2.300 2.100z" fill="#2b7fd4"/><path d="M14.300 1.200c-1.400-.6-3.600.3-6 2.100 2.600-1.200 4.500-1.400 5-.6.400.6 0 1.800-1 3.200M1.700 14.800c.9 1.200 3.700.2 6.700-2.100-2.800 1.600-5.200 2-5.700 1.100-.4-.7.100-2 1.200-3.600" stroke="#2b7fd4" stroke-width="1.100" fill="none"/></svg><div class="t" style="top:49px;letter-spacing:0.069px">Открыть карточку</div><div class="s" style="top:49px">F3</div><svg style="top:48px" width="16" height="16" viewBox="0 0 16 16"><rect x="1.500" y="2.500" width="13" height="11" fill="#eef1ff" stroke="#7a86c8"/><path d="M3 5.500h3M7 5.500h6M3 7.500h2M6 7.500h7M3 9.500h4M8 9.500h5M3 11.500h3M7 11.500h6" stroke="#4a5cc0" stroke-width="1"/></svg><div class="t" style="top:71px;letter-spacing:0.039px">История общения</div><div class="s" style="top:71px">F4</div><svg style="top:70px" width="16" height="16" viewBox="0 0 16 16"><rect x="3.500" y="2.500" width="7" height="12" rx="1" fill="#c9ced6" stroke="#7b828e"/><rect x="5" y="4" width="4" height="3.500" fill="#5aa0e8"/><path d="M5 9.500h4M5 11.500h4" stroke="#7b828e" stroke-width="1" stroke-dasharray="1 .5"/><path d="M4.500 0.500v2" stroke="#7b828e"/><path d="M9 10.500h3.500V8.500l3.200 3.200-3.200 3.200v-2H9z" fill="#3b8fe6" stroke="#1f62b5" stroke-width=".6"/></svg><div class="t" style="top:93px;letter-spacing:-0.102px">Фото объекта с интернет</div><div class="s" style="top:93px">Ctrl+F</div><svg style="top:92px" width="16" height="16" viewBox="0 0 16 16"><circle cx="8" cy="8" r="7.8" fill="#f2f2f2"/><path d="M9.5 4L5 .6A8 8 0 0 1 14.1 2.900L12.3 8.200z" fill="#e8453c"/><path d="M12.3 8.200L14.1 2.900A8 8 0 0 1 14.8 12.2L9.2 12.1z" fill="#f6b928"/><path d="M9.2 12.1L14.8 12.2A8 8 0 0 1 6.1 15.8L4.4 10.4z" fill="#3aa757"/><path d="M4.4 10.4L6.1 15.8A8 8 0 0 1 0 8.600L4.6 5.400z" fill="#2f7ed8"/><path d="M4.6 5.400L0 8.600A8 8 0 0 1 5 .6L9.5 4z" fill="#8e4fc0"/><path d="M9.5 4L5 .6" stroke="#f2f2f2" stroke-width=".7"/></svg><div class="t" style="top:115px;letter-spacing:-0.176px">Показать на Google карте</div><svg style="top:114px" width="16" height="16" viewBox="0 0 16 16"><path d="M8 .8C5 .8 2.800 3 2.800 5.900 2.800 9.500 8 15.500 8 15.500s5.200-6 5.200-9.600C13.200 3 11 .8 8 .8z" fill="#ea4335"/><circle cx="8" cy="5.800" r="2" fill="#f2f2f2"/></svg><div class="sep" style="top:135px"></div><div class="t" style="top:143px;letter-spacing:0.006px">Добавить в &quot;Мои объекты&quot;</div><div class="s" style="top:143px">F5</div><div class="t" style="top:165px;letter-spacing:0.047px">Метка &quot;Ознакомлен&quot;</div><div class="s" style="top:165px">F6</div><svg style="top:164px" width="16" height="16" viewBox="0 0 16 16"><path d="M1.500 7.500l2.300-1.300 2.400 4.300C8 6 10.500 2.800 14.500.8l.5.700C11.500 4.500 9 9 7 14.500H5.200z" fill="#d42a20" stroke="#4a1410" stroke-width=".7"/></svg><div class="t" style="top:187px;letter-spacing:0.04px">Метка &quot;Избранное&quot;</div><div class="s" style="top:187px">F7</div><svg style="top:186px" width="16" height="16" viewBox="0 0 16 16"><path d="M1.500 13.500V4.500l3 3.500L8 2.500 11.500 8l3-3.500v9z" fill="#f3b63a" stroke="#d28a1a" stroke-width=".8"/><rect x="1.500" y="11" width="13" height="2.500" fill="#f7cf6a"/><circle cx="4.500" cy="12.200" r=".7" fill="#d8342a"/><circle cx="8" cy="12.200" r=".7" fill="#d8342a"/><circle cx="11.500" cy="12.200" r=".7" fill="#d8342a"/></svg><div class="t" style="top:209px;letter-spacing:-0.024px">Метка &quot;Перезвонить&quot;</div><div class="s" style="top:209px">F8</div><svg style="top:208px" width="16" height="16" viewBox="0 0 16 16"><path d="M3.200 1.200c.5-.5 1.300-.4 1.700.2l1.500 2.300c.3.500.2 1.100-.2 1.500l-.9.800c.9 1.900 2.300 3.300 4.200 4.200l.8-.9c.4-.4 1-.5 1.500-.2l2.300 1.500c.6.400.7 1.200.2 1.700l-1 1.100c-.9.900-2.300 1.100-3.500.6C6 12.400 3.100 9.500 1.500 5.700 1 4.500 1.200 3.100 2.100 2.200z" fill="#222"/><path d="M9 1.200c3 .3 5.500 2.800 5.800 5.800M9 4c1.600.3 2.700 1.400 3 3" stroke="#222" stroke-width="1.300" fill="none"/></svg><div class="t" style="top:231px;letter-spacing:-0.104px">Метка &quot;Нет связи&quot;</div><div class="s" style="top:231px">F9</div><svg style="top:230px" width="16" height="16" viewBox="0 0 16 16"><path d="M3.200 1.200c.5-.5 1.300-.4 1.700.2l1.500 2.300c.3.500.2 1.100-.2 1.500l-.9.800c.9 1.900 2.300 3.300 4.200 4.200l.8-.9c.4-.4 1-.5 1.500-.2l2.300 1.500c.6.400.7 1.200.2 1.700l-1 1.100c-.9.900-2.300 1.100-3.500.6C6 12.400 3.100 9.500 1.500 5.700 1 4.500 1.200 3.100 2.100 2.200z" fill="#222" transform="translate(1 0)"/><path d="M1 14.500L14 3" stroke="#222" stroke-width="2.600"/></svg><div class="t" style="top:253px;letter-spacing:-0.065px">Метка &quot;Не дозвонился&quot;</div><div class="s" style="top:253px">F10</div><svg style="top:252px" width="16" height="16" viewBox="0 0 16 16"><path d="M3.200 1.200c.5-.5 1.300-.4 1.700.2l1.500 2.300c.3.500.2 1.100-.2 1.500l-.9.800c.9 1.900 2.300 3.300 4.200 4.200l.8-.9c.4-.4 1-.5 1.500-.2l2.300 1.500c.6.400.7 1.200.2 1.700l-1 1.100c-.9.900-2.300 1.100-3.500.6C6 12.400 3.100 9.500 1.500 5.700 1 4.500 1.200 3.100 2.100 2.200z" fill="#222"/><path d="M8.500 5.500h6.500" stroke="#222" stroke-width="1.800" stroke-dasharray="1.700 .9"/></svg><div class="t" style="top:275px;letter-spacing:-0.07px">Метка &quot;Сдана/Продана&quot;</div><div class="s" style="top:275px">F11</div><svg style="top:274px" width="16" height="16" viewBox="0 0 16 16"><path d="M3.500 2.500l3 13" stroke="#222" stroke-width="1.300"/><path d="M3.300 2.200c3 1 6 .5 10-1l1.500 7.300c-4 1.500-7 2-10 1z" fill="#fff" stroke="#222" stroke-width=".8"/><path d="M3.500 2.400l2.600.5.500 2.400-2.600-.5zM8.700 2.700l2.500-.7.500 2.400-2.500.7zM6.600 5.300l2.600.2.500 2.400-2.600-.2zM11.700 4.400l2.400-.9.500 2.400-2.400.9zM4.500 7.200l2.600.5.500 2.300-2.600-.5zM9.700 7.900l2.500-.7.500 2.300-2.500.7z" fill="#222"/></svg><div class="t" style="top:297px;letter-spacing:-0.061px">Метка &quot;Общение через сайт&quot;</div><svg style="top:296px" width="16" height="16" viewBox="0 0 16 16"><rect x="0" y="0" width="16" height="16" rx="3.500" fill="#3fd366"/><path d="M8 2.800a5.200 5.200 0 0 0-4.500 7.800L2.800 13.200l2.700-.7A5.200 5.200 0 1 0 8 2.800z" fill="none" stroke="#fff" stroke-width="1.100"/><path d="M6.200 5.500c-.3 0-.8.500-.8 1.200 0 1.600 2.300 3.900 3.900 3.900.7 0 1.200-.5 1.200-.8 0-.4-1-1-1.300-1-.3 0-.4.500-.7.500-.5 0-1.700-1.200-1.700-1.700 0-.3.500-.4.500-.7 0-.3-.6-1.400-1.100-1.400z" fill="#fff"/></svg><div class="t" style="top:319px;letter-spacing:0.148px">Метка &quot;Мусор&quot;</div><svg style="top:318px" width="16" height="16" viewBox="0 0 16 16"><path d="M2.800 4.500h10.400l-.9 11H3.700z" fill="#f6f6f6" stroke="#4a4a4a" stroke-width="1"/><path d="M1.500 4h13" stroke="#4a4a4a" stroke-width="1.500"/><path d="M5.500 3.500V1.500h5v2" stroke="#4a4a4a" stroke-width="1" fill="none"/><path d="M5.800 6.500v7M8 6.500v7M10.200 6.500v7" stroke="#4a4a4a" stroke-width="1"/></svg><div class="t" style="top:341px;letter-spacing:-0.145px">На печать</div><div class="s" style="top:341px">F12</div><svg style="top:340px" width="16" height="16" viewBox="0 0 16 16"><rect x="4" y="1.500" width="8" height="5" fill="#fff" stroke="#c8c8c8" stroke-width=".6"/><rect x="1" y="6" width="14" height="5.500" rx="1" fill="#d6d6d6" stroke="#8a8a8a" stroke-width=".7"/><rect x="3.500" y="10" width="9" height="4.500" fill="#fff" stroke="#a0a0a0" stroke-width=".6"/><path d="M4.500 1v5M11.500 1v5M4.500 11.500v4M11.500 11.500v4" stroke="#f06a20" stroke-width="1.100"/></svg><div class="t" style="top:363px;letter-spacing:-0.088px">Отметка &quot;Здесь закончил работу&quot;</div><svg style="top:362px" width="16" height="16" viewBox="0 0 16 16"><path d="M.3 6.300a3.600 3.600 0 1 1 4.600 3.400c-.3 2-1.400 3.500-3.400 4.500l-.7-1.100c1.300-.9 2-2 2.100-3.300A3.600 3.600 0 0 1 .3 6.300zM8.500 6.300a3.600 3.600 0 1 1 4.600 3.400c-.3 2-1.400 3.500-3.400 4.500l-.7-1.100c1.300-.9 2-2 2.100-3.300a3.600 3.600 0 0 1-2.600-3.500z" fill="#1c1c1c"/></svg><div class="t" style="top:385px;letter-spacing:-0.215px">Снять все метки</div><svg style="top:384px" width="16" height="16" viewBox="0 0 16 16"><path d="M8 3l1.300 3.200 3.400.2-2.600 2.200.8 3.400L8 10.200 5.100 12l.8-3.400-2.600-2.200 3.400-.2z" fill="#f7f7f7" stroke="#e2e2e2" stroke-width=".8"/></svg><div class="sep" style="top:405px"></div><div class="t" style="top:413px;letter-spacing:-0.438px">Удалить</div><div class="s" style="top:413px">Del</div><svg style="top:412px" width="16" height="16" viewBox="0 0 16 16"><path d="M1 3l2.300-2.300L8 5.400 12.700.7 15 3l-4.600 4.800L15 12.700 12.700 15 8 10.300 3.300 15 1 12.700l4.600-4.900z" fill="#e0281c" stroke="#a8180e" stroke-width=".6"/></svg></div>
</body></html>
